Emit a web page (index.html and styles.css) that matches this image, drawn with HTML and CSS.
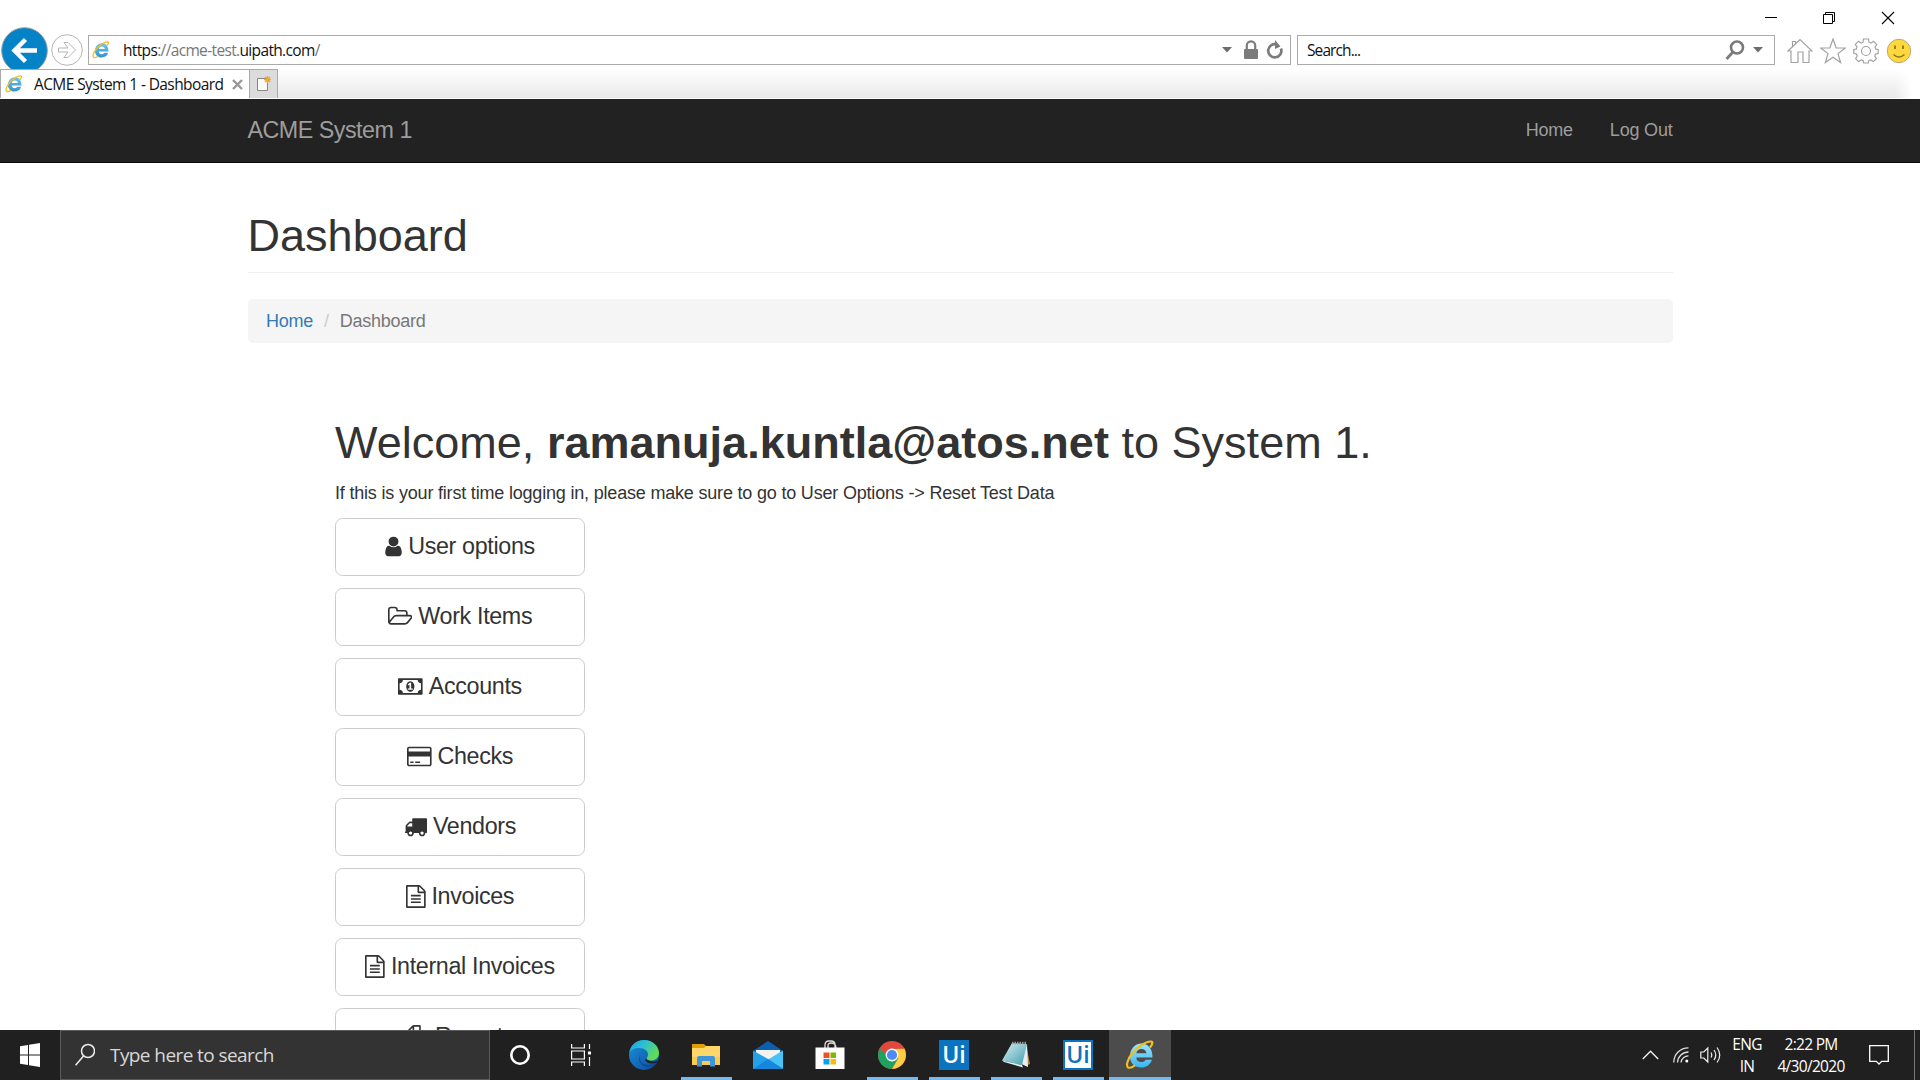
FILE: index.html
```html
<!DOCTYPE html>
<html lang="en">
<head>
<meta charset="utf-8">
<title>ACME System 1 - Dashboard</title>
<link rel="stylesheet" href="styles.css">
</head>
<body>
<svg width="0" height="0" class="defs">
  <defs>
    <linearGradient id="ieBlue" x1="0" y1="0" x2="0" y2="1"><stop offset="0" stop-color="#9be6fc"/><stop offset="1" stop-color="#3cb4ee"/></linearGradient>
    <linearGradient id="ieSmall" x1="0" y1="0" x2="0" y2="1"><stop offset="0" stop-color="#6dc4f0"/><stop offset="1" stop-color="#3592d0"/></linearGradient>
    <linearGradient id="edgeTop" x1="0" y1="0" x2="1" y2=".5"><stop offset="0" stop-color="#1f9de0"/><stop offset=".5" stop-color="#2cc0d3"/><stop offset="1" stop-color="#62dc52"/></linearGradient>
    <linearGradient id="edgeLow" x1="0" y1="0" x2="1" y2="1"><stop offset="0" stop-color="#1b8fdc"/><stop offset="1" stop-color="#0c4c9c"/></linearGradient>
    <linearGradient id="note" x1="0" y1="0" x2="1" y2="1"><stop offset="0" stop-color="#d8eef0"/><stop offset="1" stop-color="#3f9fb0"/></linearGradient>
    <symbol id="ie" viewBox="0 0 30 30">
      <path d="M27.500 17.500H11.200c.3 3 2.200 4.600 5 4.600 2.200 0 3.600-.9 4.400-2.400h6.300C25.500 24.500 21.600 27.500 16.200 27.500 9.500 27.500 5 23.200 5 16.500 5 9.300 9.700 3.600 16.400 3.600c7 0 11.300 5.700 11.100 13.900zM21.400 13.300c-.2-2.600-2-4.200-4.900-4.200-2.800 0-4.700 1.600-5.200 4.200z"/>
      <path d="M25 7.500C27.500 4.500 28 2 26.500 1.600 22 .8 12 7 7 13.500 2.500 19.500.8 25.500 3 27.300c1.500 1 4.500-.2 7-2" fill="none" stroke="#f2bf1d" stroke-width="2.200"/>
    </symbol>
  </defs>
</svg>
<div class="screen">
  <header class="browser">
    <div class="titlebar">
      <svg width="12" height="12"><path d="M0 5.500h12" stroke="#000"/></svg>
      <svg width="14" height="14" fill="none" stroke="#000"><path d="M1.500 3.500h9v9h-9zM3.500 3V1.500h9v9H11"/></svg>
      <svg width="14" height="14"><path d="M1 1l12 12M13 1L1 13" stroke="#000" stroke-width="1.100"/></svg>
    </div>
    <div class="toolbar">
      <svg class="back" width="48" height="48" viewBox="0 0 48 48"><circle cx="24.500" cy="24.500" r="22.800" fill="#0483c6" stroke="#8b9ca5" stroke-width="1"/><path d="M37 24.500H15M25.500 13.500L14.500 24.500l11 11" fill="none" stroke="#fff" stroke-width="4.500"/></svg>
      <svg class="forward" width="32" height="32" viewBox="0 0 32 32" fill="none" stroke="#b5b5b5"><circle cx="16" cy="16" r="15.300"/><path d="M7.500 14h9.500l-4-5.500h4l7.500 7.500-7.500 7.500h-4l4-5.500H7.500z"/></svg>
      <div class="address">
        <svg width="18" height="18" fill="url(#ieSmall)"><use href="#ie"/></svg>
        <span class="url">https<i>://acme-test.</i>uipath.com<i>/</i></span>
        <svg class="caret" width="10" height="6"><path d="M0 0h10L5 5.500z"/></svg>
        <svg class="lock" width="16" height="20" viewBox="0 0 16 20"><rect x="1" y="9" width="14" height="10" rx="1" fill="#7b7b7b"/><path d="M3.800 9V5.500a4.200 4.200 0 0 1 8.400 0V9" fill="none" stroke="#7b7b7b" stroke-width="2.200"/></svg>
        <svg class="reload" width="18" height="20" viewBox="0 0 18 20"><path d="M11 4.500A6.600 6.600 0 1 0 15 8.500" fill="none" stroke="#7b7b7b" stroke-width="2.700"/><path d="M9 0l5.500 6.500L9 9z" fill="#7b7b7b"/></svg>
      </div>
      <div class="find">
        <span>Search...</span>
        <svg width="20" height="20" viewBox="0 0 20 20" fill="none" stroke="#7b7b7b"><circle cx="12" cy="7.500" r="6" stroke-width="2.600"/><path d="M8 12l-6.500 7" stroke-width="2.800"/></svg>
        <svg class="caret" width="10" height="6"><path d="M0 0h10L5 5.500z"/></svg>
      </div>
      <div class="tools">
        <svg width="26" height="26" viewBox="0 0 26 26" fill="none" stroke="#a2a2a2" stroke-width="1.200"><path d="M1 13L13 1.500 25 13h-3v11.500h-6V14h-5v10.500H4V13zM5.500 8.500V3.500h3V5.500"/></svg>
        <svg width="26" height="26" viewBox="0 0 26 26" fill="none" stroke="#a2a2a2" stroke-width="1.200"><path d="M13 1l3.100 8.800 9.100.2-7.200 5.600 2.600 9-7.600-5.300-7.600 5.300 2.600-9L.8 10l9.100-.2z"/></svg>
        <svg width="26" height="26" viewBox="0 0 26 26" fill="none" stroke="#a2a2a2" stroke-width="1.200"><circle cx="13" cy="13" r="4.500"/><path d="M10.500 1h5l.5 3.200 2 .9 2.700-1.900 3 3.300L22 9l.8 2.200 2.400.3v4l-2.600.6-.8 2 1.600 2.500-3 3-2.600-1.700-2 .8-.5 2.300h-4.600l-.5-2.300-2-.8-2.600 1.700-3-3L4.200 18l-.8-2-2.600-.5v-4l2.400-.3L4 9 2.300 6.500l3-3.300L8 5.100l2-.9z"/></svg>
        <svg width="26" height="26" viewBox="0 0 26 26"><circle cx="13" cy="13" r="11.700" fill="#ffd83b" stroke="#b5a97a"/><path d="M9 7.500v3.500M17 7.500v3.500" stroke="#8c7628" stroke-width="1.800"/><path d="M7.500 16.500q5.500 5 11 0" fill="none" stroke="#8c7628" stroke-width="1.600"/></svg>
      </div>
    </div>
    <div class="tabs">
      <div class="tab">
        <svg width="18" height="18" fill="url(#ieSmall)"><use href="#ie"/></svg>
        <span>ACME System 1 - Dashboard</span>
        <svg width="11" height="11"><path d="M1 1l9 9M10 1l-9 9" stroke="#989898" stroke-width="2.400"/></svg>
      </div>
      <div class="newtab"><svg width="16" height="16" viewBox="0 0 16 16"><path d="M1.500 2.500h10v12h-10z" fill="#fafafa" stroke="#888"/><path d="M11.500 0v7M8 3.500h7M9 1l5 5M14 1L9 6" stroke="#f2a51f" stroke-width="1.300"/></svg></div>
    </div>
  </header>
  <nav class="navbar"><div class="container">
    <span class="brand">ACME System 1</span>
    <span class="links"><a>Home</a><a>Log Out</a></span>
  </div></nav>
  <main class="container content">
    <h1 class="title">Dashboard</h1>
    <div class="crumbs"><a>Home</a><i>/</i><span>Dashboard</span></div>
    <section class="welcome">
      <h1>Welcome, <b>ramanuja.kuntla@atos.net</b> to System 1.</h1>
      <p>If this is your first time logging in, please make sure to go to User Options -&gt; Reset Test Data</p>
      <div class="menu">
        <a class="btn"><svg class="fa" viewBox="256 0 1280 1792" style="width:17px"><path d="M1536 1399q0 109-62.500 187t-150.500 78h-854q-88 0-150.500-78t-62.500-187q0-85 8.500-160.500t31.500-152 58.500-131 94-89 134.500-34.500q131 128 313 128t313-128q76 0 134.500 34.500t94 89 58.500 131 31.500 152 8.500 160.500zm-256-887q0 159-112.500 271.500t-271.500 112.500-271.500-112.500-112.500-271.500 112.500-271.500 271.500-112.500 271.500 112.500 112.500 271.500z"/></svg>User options</a>
        <a class="btn"><svg class="fa" viewBox="64 0 1920 1792" style="width:24.600px"><path d="M1845 931q0-35-53-35h-1088q-40 0-85.500 21.500t-71.500 52.500l-294 363q-18 24-18 40 0 35 53 35h1088q40 0 86-22t71-53l294-363q18-22 18-39zm-1141-163h768v-160q0-40-28-68t-68-28h-576q-40 0-68-28t-28-68v-64q0-40-28-68t-68-28h-320q-40 0-68 28t-28 68v853l256-315q44-53 116-87.500t140-34.500zm1269 163q0 62-46 120l-295 363q-43 53-116 87.500t-140 34.500h-1088q-92 0-158-66t-66-158v-960q0-92 66-158t158-66h320q92 0 158 66t66 158v32h544q92 0 158 66t66 158v160h192q54 0 99 24.500t67 70.500q15 32 15 68z"/></svg>Work Items</a>
        <a class="btn"><svg class="fa" viewBox="0 0 1920 1792" style="width:24.600px"><path d="M768 1152h384v-96h-128v-448h-114l-148 137 77 80q42-37 55-57h2v288h-128v96zm512-256q0 70-21 142t-59.500 134-101.500 101-138 39-138-39-101.500-101-59.500-134-21-142 21-142 59.500-134 101.500-101 138-39 138 39 101.500 101 59.500 134 21 142zm512 256v-512q-106 0-181-75t-75-181h-1152q0 106-75 181t-181 75v512q106 0 181 75t75 181h1152q0-106 75-181t181-75zm128-832v1152q0 26-19 45t-45 19h-1792q-26 0-45-19t-19-45v-1152q0-26 19-45t45-19h1792q26 0 45 19t19 45z"/></svg>Accounts</a>
        <a class="btn"><svg class="fa" viewBox="0 0 1920 1792" style="width:24.600px"><path d="M1760 128q66 0 113 47t47 113v1216q0 66-47 113t-113 47h-1600q-66 0-113-47t-47-113v-1216q0-66 47-113t113-47h1600zm-1600 128q-13 0-22.500 9.500t-9.500 22.500v224h1664v-224q0-13-9.500-22.500t-22.500-9.500h-1600zm1600 1280q13 0 22.500-9.500t9.500-22.500v-608h-1664v608q0 13 9.500 22.500t22.500 9.500h1600zm-1504-128v-128h256v128h-256zm384 0v-128h384v128h-384z"/></svg>Checks</a>
        <a class="btn"><svg class="fa" viewBox="0 0 1792 1792" style="width:23px"><path d="M640 1408q0-52-38-90t-90-38-90 38-38 90 38 90 90 38 90-38 38-90zm-384-512h384v-256h-158q-13 0-22 9l-195 195q-9 9-9 22v30zm1280 512q0-52-38-90t-90-38-90 38-38 90 38 90 90 38 90-38 38-90zm256-1088v1024q0 15-4 26.500t-13.500 18.500-16.500 11.500-23.500 6-22.500 2-25.500 0-22.500-.5q0 106-75 181t-181 75-181-75-75-181h-384q0 106-75 181t-181 75-181-75-75-181h-64q-3 0-22.500.5t-25.500 0-22.500-2-23.500-6-16.500-11.500-13.500-18.500-4-26.500q0-26 19-45t45-19v-320q0-8-.5-35t0-38 2.500-34.500 6.500-37 14-30.500 22.500-30l198-198q19-19 50.500-32t58.500-13h160v-192q0-26 19-45t45-19h1024q26 0 45 19t19 45z"/></svg>Vendors</a>
        <a class="btn"><svg class="fa" viewBox="128 0 1536 1792" style="width:19.700px"><path id="doc" d="M1596 380q28 28 48 76t20 88v1152q0 40-28 68t-68 28h-1344q-40 0-68-28t-28-68v-1600q0-40 28-68t68-28h896q40 0 88 20t76 48zm-444-244v376h376q-10-29-22-41l-313-313q-12-12-41-22zm384 1528v-1024h-416q-40 0-68-28t-28-68v-416h-768v1536h1280zm-1024-864q0-14 9-23t23-9h704q14 0 23 9t9 23v64q0 14-9 23t-23 9h-704q-14 0-23-9t-9-23v-64zm736 224q14 0 23 9t9 23v64q0 14-9 23t-23 9h-704q-14 0-23-9t-9-23v-64q0-14 9-23t23-9h704zm0 256q14 0 23 9t9 23v64q0 14-9 23t-23 9h-704q-14 0-23-9t-9-23v-64q0-14 9-23t23-9h704z"/></svg>Invoices</a>
        <a class="btn"><svg class="fa" viewBox="128 0 1536 1792" style="width:19.700px"><use href="#doc"/></svg>Internal Invoices</a>
        <a class="btn"><svg class="fa" viewBox="0 0 1792 1792" style="width:23px"><path d="M1696 384q40 0 68 28t28 68v1216q0 40-28 68t-68 28h-960q-40 0-68-28t-28-68v-288h-544q-40 0-68-28t-28-68v-672q0-40 20-88t48-76l408-408q28-28 76-48t88-20h416q40 0 68 28t28 68v328q68-40 128-40h416zm-544 213l-299 299h299v-299zm-640-384l-299 299h299v-299zm196 647l316-316v-416h-384v416q0 40-28 68t-68 28h-416v640h512v-256q0-40 20-88t48-76zm956 804v-1152h-384v416q0 40-28 68t-68 28h-416v640h896z"/></svg>Reports</a>
      </div>
    </section>
  </main>
  <footer class="taskbar">
    <div class="start"><svg width="20" height="24" viewBox="0 0 20 20" preserveAspectRatio="none" fill="#fff"><path d="M0 2.800L8 1.600v7.900H0zM9 1.500L20 0v9.500H9zM0 10.500h8v7.900L0 17.200zM9 10.500h11V20L9 18.500z"/></svg></div>
    <div class="search"><svg width="20" height="24" viewBox="0 0 20 24" fill="none" stroke="#eee" stroke-width="1.500"><circle cx="13" cy="8" r="6.500"/><path d="M8.500 13L.6 22.300"/></svg><span>Type here to search</span></div>
    <div class="apps">
      <div><svg width="22" height="22"><circle cx="11" cy="11" r="8.700" fill="none" stroke="#fff" stroke-width="2.600"/></svg></div>
      <div><svg width="20" height="24" viewBox="0 0 20 24" fill="none" stroke="#fff" stroke-width="1.200"><path d="M.6 1v4h12.800V1M.6 23v-4h12.800v4M.6 8h12.800v8H.6zM18.500 1v5M18.500 14v9"/><path d="M17 8.500h3v3h-3z" fill="#fff" stroke="none"/></svg></div>
      <div><svg width="30" height="30" viewBox="0 0 30 30"><circle cx="15" cy="15" r="15" fill="url(#edgeLow)"/><path d="M.2 13C1.500 5 7.500 0 15 0c8.500 0 15 6 15 13 0 5-4 7.500-8 7.500-3 0-4.500-1-4.500-2 0-.8 1.500-1.500 1.500-4C19 11 15.500 8 10.500 8 5.500 8 1.500 10 .2 13z" fill="url(#edgeTop)"/><path d="M12 12c-3.500 3-1.500 14 8.500 13 3.500-.3 6-2 7.500-3.500-1 2-2.500 4-4.500 5.500C13 29 6.500 20 12 12z" fill="#0d4b96"/><path d="M30 20c-4 2.300-10.500 2-12.800-1.500l-1 1.500c2 4 8 4.500 12 2z" fill="#202020"/></svg></div>
      <div class="on"><svg width="28" height="24" viewBox="0 0 28 24"><path d="M0 1h12l2 2v5H0z" fill="#e29f05"/><path d="M0 5h12l2-2h14v19H0z" fill="#ffd667"/><path d="M0 14h28v8H0z" fill="#f7ca52"/><path d="M5 23.500V15q0-2 2-2h14q2 0 2 2v8.500h-5V18H10v5.500z" fill="#3e95dc"/></svg></div>
      <div><svg width="30" height="28" viewBox="0 0 30 28"><path d="M0 10L15 0l15 10v8H0z" fill="#0b5fae"/><path d="M3 9h24v9L15 21 3 14z" fill="#f3f3f3"/><path d="M0 9.500L15 18l15 10H0z" fill="#22a1e8"/><path d="M30 9.500V28L15 18.500z" fill="#49c3f5"/><path d="M0 28l15-10 15 10z" fill="#1687dc"/></svg></div>
      <div><svg width="30" height="30" viewBox="0 0 30 30"><path d="M10 8V5q0-4 4-4h2q4 0 4 4v3M13 8V6q0-3 3-3 5 0 5 5" fill="none" stroke="#ddd" stroke-width="1.300"/><path d="M.5 7.500h29V29h-29z" fill="#fff"/><path d="M8.500 12.500h6v5.500h-6z" fill="#f25022"/><path d="M15.500 12.500h5.500v5.500h-5.500z" fill="#7fba00"/><path d="M8.500 19h6v5.500h-6z" fill="#00a4ef"/><path d="M15.500 19h5.500v5.500h-5.500z" fill="#ffb900"/></svg></div>
      <div class="on"><svg width="28" height="28" viewBox="0 0 28 28"><circle cx="14" cy="14" r="14" fill="#e04a3d"/><path d="M1.900 7A14 14 0 0 0 14 28l6.100-10.500L14 14H7.900z" fill="#1da261"/><path d="M26.100 7A14 14 0 0 1 14 28l6.100-10.500L14 8z" fill="#ffcd42"/><path d="M14 7.700h12.500L26 7 14 6z" fill="#e04a3d"/><circle cx="14" cy="14" r="6.400" fill="#fff"/><circle cx="14" cy="14" r="5.100" fill="#4c8bf5"/></svg></div>
      <div class="on"><span class="ui">Ui</span></div>
      <div class="on"><svg width="28" height="28" viewBox="0 0 28 28"><path d="M24 3l4 20-5 2z" fill="#b5853a"/><path d="M25 3l1 23-9-4z" fill="#e8eef0"/><path d="M10 2l15 1-5 21L0 19.500z" fill="url(#note)"/><path d="M0 19.500l20 4.500 1 2.500L2 21z" fill="#e3f0f2"/><path d="M10 2h15" stroke="#999" stroke-width="2.500" stroke-dasharray="1.500 1"/></svg></div>
      <div class="on"><span class="ui light">Ui</span></div>
      <div class="on active"><svg width="30" height="30" fill="url(#ieBlue)"><use href="#ie"/></svg></div>
    </div>
    <div class="tray">
      <svg width="17" height="10"><path d="M.8 9L8.500 1.300 16.200 9" fill="none" stroke="#eee" stroke-width="1.400"/></svg>
      <svg class="wifi" width="16" height="16" viewBox="0 0 16 16" fill="none" stroke="#ddd" stroke-width="1.300"><path d="M.8 15.500A14.500 14.500 0 0 1 15.500.8M4.500 15.500A11 11 0 0 1 15.500 5M8 15.500A7.500 7.500 0 0 1 15.500 8.800"/><circle cx="13.800" cy="14" r="1.500" fill="#fff" stroke="none"/></svg>
      <svg class="vol" width="21" height="18" viewBox="0 0 21 18" fill="none" stroke="#eee" stroke-width="1.200"><path d="M.8 6h3l4-4v14l-4-4h-3zM11 6.500q1.500 2.500 0 5M14 4q3.500 5 0 10M17 1.500q5.500 7.500 0 15"/></svg>
      <span class="lang">ENG<br>IN</span>
      <span class="clock">2:22 PM<br>4/30/2020</span>
      <svg class="action" width="20" height="20" viewBox="0 0 20 20"><path d="M.7.700h18.600v15.600h-6.600L10 19l-2.700-2.700H.7z" fill="none" stroke="#fff" stroke-width="1.300"/></svg>
    </div>
  </footer>
</div>
</body>
</html>
```
FILE: styles.css
```css
* { box-sizing: border-box; }
body { margin: 0; font-family: "Liberation Sans", Arial, sans-serif; color: #333; background: #fff; }
svg { display: block; flex: none; }
i { font-style: normal; }
.defs { position: absolute; }
.screen { width: 1920px; height: 1080px; overflow: hidden; display: flex; flex-direction: column; }

.browser { height: 99px; flex: none; font: 15.5px "Open Sans", "Noto Sans", sans-serif; color: #111; display: flex; flex-direction: column; }
.titlebar { height: 35px; padding: 0 25px 0 0; display: flex; justify-content: flex-end; align-items: center; gap: 45px; }
.toolbar { height: 34px; display: flex; align-items: flex-start; }
.back { margin: -9px 2px 0 0; }
.forward { margin: -1px 5px 0 1px; }
.address, .find { height: 30px; border: 1px solid #aaa; display: flex; align-items: center; }
.address { width: 1203px; padding: 0 6px 0 3px; }
.url { margin-left: 13px; flex: 1; letter-spacing: -.65px; }
.url i { color: #777; }
.caret { fill: #6d6d6d; }
.lock { margin-left: 11px; }
.reload { margin-left: 7px; }
.find { width: 478px; margin-left: 6px; padding: 0 11px 0 9px; }
.find span { flex: 1; letter-spacing: -.9px; }
.find .caret { margin-left: 8px; }
.tools { display: flex; gap: 7px; margin: 3px 0 0 12px; }
.tabs { height: 30px; display: flex; z-index: 1; border-bottom: 1px solid #fff; background: linear-gradient(90deg, transparent 1895px, #fff 1912px), linear-gradient(#fff, #e9e9e9); }
.tab { width: 250px; border: 1px solid #aaa; border-bottom: 0; background: #fff; display: flex; align-items: center; padding: 0 6px 0 4px; white-space: nowrap; }
.tab span { margin-left: 11px; flex: 1; letter-spacing: -.6px; }
.newtab { width: 28px; border: solid #aaa; border-width: 1px 1px 0 0; background: #dcdcdc; display: flex; align-items: center; justify-content: center; }

.container { width: 1425px; margin: 0 auto; }
.navbar { height: 64px; flex: none; background: #222; border-bottom: 1px solid #080808; color: #9d9d9d; }
.navbar .container { display: flex; justify-content: space-between; align-items: center; height: 62px; }
.brand { font-size: 23.3px; letter-spacing: -.5px; }
.links { display: flex; gap: 37px; font-size: 18px; letter-spacing: -.2px; }
.content { flex: 1; min-height: 0; overflow: hidden; }
h1 { font-weight: 400; font-size: 45px; line-height: 50px; margin: 0; letter-spacing: .02px; }
.title { margin-top: 48px; height: 62px; border-bottom: 1px solid #eee; }
.crumbs { margin-top: 26px; height: 44px; border-radius: 5px; background: #f5f5f5; display: flex; align-items: center; padding: 0 18.5px; font-size: 18px; letter-spacing: -.25px; color: #777; }
.crumbs a { color: #337ab7; }
.crumbs i { color: #ccc; margin: 0 11px; }
.welcome { margin: 75px 0 0 87.5px; }
.welcome p { font-size: 18px; letter-spacing: -.19px; line-height: 25px; margin: 13px 0 12px; }
.menu { display: flex; flex-direction: column; gap: 12px; }
.btn { width: 250px; height: 58px; border: 1px solid #ccc; border-radius: 7.5px; display: flex; align-items: center; justify-content: center; gap: 6px; padding-bottom: 1px; font-size: 23.3px; letter-spacing: -.35px; white-space: nowrap; }
.fa { height: 23px; fill: #333; }

.taskbar { height: 50px; flex: none; background: #202020; color: #fff; display: flex; font-family: "Open Sans", "Noto Sans", sans-serif; }
.start { width: 60px; display: flex; align-items: center; justify-content: center; }
.search { width: 430px; border: 1px solid #5b5b5b; background: #333; display: flex; align-items: center; padding-left: 14px; font-size: 19px; color: #d8d8d8; letter-spacing: -.58px; }
.search span { margin: 0 0 0 15px; }
.apps { display: flex; }
.apps div { width: 62px; display: flex; align-items: center; justify-content: center; }
.apps div:first-child { width: 60px; }
.apps div:nth-child(2) { width: 63px; padding-right: 2px; }
.on { background: linear-gradient(#76b9ed, #76b9ed) center bottom / 51px 3px no-repeat; }
.apps .active { background: linear-gradient(#76b9ed, #76b9ed) center bottom / 62px 3px no-repeat #4c4c4c; }
.ui { width: 30px; height: 30px; background: #0b74c0; font-size: 23px; font-weight: 600; line-height: 29px; text-align: center; }
.light { background: #fff; color: #0b74c0; border: 2px solid #0b74c0; line-height: 25px; }
.tray { flex: 1; display: flex; align-items: center; justify-content: flex-end; border-right: 1px solid #777; margin-right: 5px; font-size: 15.5px; line-height: 22px; text-align: center; letter-spacing: -.7px; }
.wifi { margin-left: 14px; }
.vol { margin-left: 11px; }
.lang { width: 32px; margin: -1px 0 0 10px; }
.clock { width: 76px; margin: -1px 0 0 10px; }
.action { margin: 0 25px 0 20px; }
```
